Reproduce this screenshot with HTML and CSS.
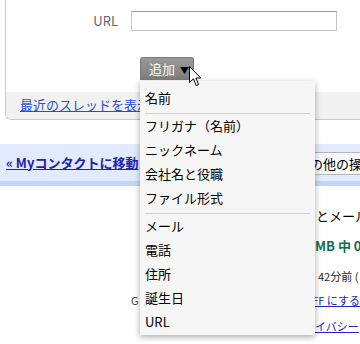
FILE: index.html
```html
<!DOCTYPE html>
<html lang="ja">

<head>
    <meta charset="UTF-8">
    <meta name="viewport" content="width=device-width, initial-scale=1.0">
    <title>連絡先の編集</title>
    <link rel="stylesheet" href="styles.css">
</head>

<body>
    <div class="page">

        <!-- Contact card -->
        <div class="card">
            <div class="card-body">
                <div class="field-row">
                    <label class="field-label" for="url">URL</label>
                    <input class="field-input" type="text" id="url">
                </div>
                <div class="add-row">
                    <button class="add-btn">追加 <span class="add-arrow">▼</span></button>
                </div>
            </div>
            <div class="card-footer">
                <a href="#" class="footer-link">最近のスレッドを表示</a>
            </div>
        </div>

        <!-- Navigation bar -->
        <div class="nav-bar">
            <a href="#" class="back-link">« Myコンタクトに移動</a>
            <span class="more-btn">その他の操作</span>
        </div>

        <!-- Page footer -->
        <div class="footer">
            <div class="footer-line line-chat">とメール</div>
            <div class="footer-line line-quota">MB 中 0</div>
            <div class="footer-line line-activity">42分前 (</div>
            <div class="footer-line line-view">
                <span class="view-label">G</span>
                <a href="#" class="small-link">OFF にする</a>
            </div>
            <div class="footer-line line-legal">
                <a href="#" class="small-link">イバシー</a>
            </div>
        </div>

        <div class="taskbar"></div>

        <!-- Add menu (open) -->
        <div class="add-menu">
            <div class="menu-item">名前</div>
            <div class="menu-sep"></div>
            <div class="menu-item">フリガナ（名前）</div>
            <div class="menu-item">ニックネーム</div>
            <div class="menu-item">会社名と役職</div>
            <div class="menu-item">ファイル形式</div>
            <div class="menu-sep"></div>
            <div class="menu-item">メール</div>
            <div class="menu-item">電話</div>
            <div class="menu-item">住所</div>
            <div class="menu-item">誕生日</div>
            <div class="menu-item">URL</div>
        </div>

        <!-- Mouse pointer -->
        <svg class="cursor" width="13" height="21" viewBox="0 0 13 21">
            <path d="M0.5 0.5 L0.5 16.5 L4.5 12.8 L7.2 19.5 L9.6 18.5 L6.9 12 L11.8 12 Z" fill="#fff" stroke="#000" stroke-width="1" stroke-linejoin="miter"/>
        </svg>
    </div>
</body>

</html>
```

FILE: styles.css
```css
body {
    margin: 0;
    font-family: "Noto Sans CJK JP", "Noto Sans", sans-serif;
    font-size: 13px;
    color: #000;
    background: #fff;
}

.page {
    position: relative;
    width: 360px;
    height: 344px;
    overflow: hidden;
}

a {
    text-decoration: underline;
}

/* card */

.card {
    width: 420px;
    margin-left: 5px;
    border-left: 1px solid #c8c8c8;
    border-bottom: 1px solid #c8c8c8;
    border-radius: 0 0 0 6px;
    overflow: hidden;
}

.card-body {
    padding: 11px 0 12px 0;
}

.field-row {
    display: flex;
    align-items: center;
    gap: 13px;
}

.field-label {
    width: 112px;
    text-align: right;
    color: #666;
    font-size: 13px;
    line-height: 20px;
}

.field-input {
    box-sizing: border-box;
    width: 206px;
    height: 20px;
    margin: 0;
    border: 1px solid #c6c6c6;
    border-top-color: #9c9c9c;
    background: #fff;
}

.add-row {
    margin-top: 26px;
    padding-left: 134px;
}

.add-btn {
    display: block;
    box-sizing: border-box;
    width: 54px;
    height: 23px;
    padding: 0 0 0 8px;
    border: 1px solid #7a7a7a;
    border-bottom: none;
    border-radius: 3px 3px 0 0;
    background: linear-gradient(#9a9a9a, #7c7c7c);
    color: #fff;
    font-family: inherit;
    font-size: 13px;
    line-height: 22px;
    text-align: left;
}

.add-arrow {
    color: #000;
    font-size: 9px;
    margin-left: 2px;
}

.card-footer {
    height: 27px;
    padding-left: 14px;
    background: #f1f1f1;
    line-height: 25px;
}

.footer-link {
    color: #2450d8;
}

/* nav bar */

.nav-bar {
    display: flex;
    align-items: center;
    height: 37px;
    margin-top: 24px;
    padding-left: 6px;
    background: #e1ebfd;
    border-bottom: 5px solid #c3d6fa;
    white-space: nowrap;
}

.back-link {
    flex-shrink: 0;
    width: 133px;
    color: #2020b0;
    font-weight: bold;
    font-size: 13px;
    line-height: 18px;
}

.more-btn {
    flex-shrink: 0;
    box-sizing: border-box;
    height: 23px;
    margin-left: 151px;
    margin-top: 2px;
    padding: 0 6px;
    border: 1px solid #b5b5b5;
    background: #f8f8f8;
    line-height: 21px;
}

/* footer */

.footer {
    height: 150px;
    white-space: nowrap;
}

.footer-line {
    line-height: 20px;
    padding-left: 316px;
}

.line-chat {
    margin-top: 20px;
}

.line-quota {
    margin-top: 10px;
    padding-left: 315px;
    color: #0d6e50;
    font-weight: bold;
}

.line-activity {
    margin-top: 10px;
    padding-left: 318px;
    font-size: 11px;
    color: #222;
}

.line-view {
    display: flex;
    margin-top: 4px;
    padding-left: 131px;
    font-size: 11px;
    color: #444;
}

.view-label {
    width: 173px;
}

.line-legal {
    margin-top: 6px;
    padding-left: 315px;
    font-size: 11px;
}

.small-link {
    color: #2222cc;
}

.taskbar {
    height: 7px;
    border-top: 1px solid #98aecb;
    background: linear-gradient(#c2d6ee, #b3cbe6);
    border-bottom: 2px solid #303030;
}

/* dropdown menu */

.add-menu {
    position: absolute;
    left: 140px;
    top: 81px;
    width: 175px;
    padding: 5px 0 1px 0;
    background: #f6f6f6;
    box-shadow: 0 2px 6px rgba(0, 0, 0, 0.35);
}

.menu-item {
    height: 24px;
    padding-left: 5px;
    font-size: 13px;
    line-height: 24px;
    white-space: nowrap;
}

.menu-sep {
    height: 1px;
    margin: 3px 5px 0 5px;
    background: #d0d0d0;
}

.cursor {
    position: absolute;
    left: 189px;
    top: 66px;
}
```
